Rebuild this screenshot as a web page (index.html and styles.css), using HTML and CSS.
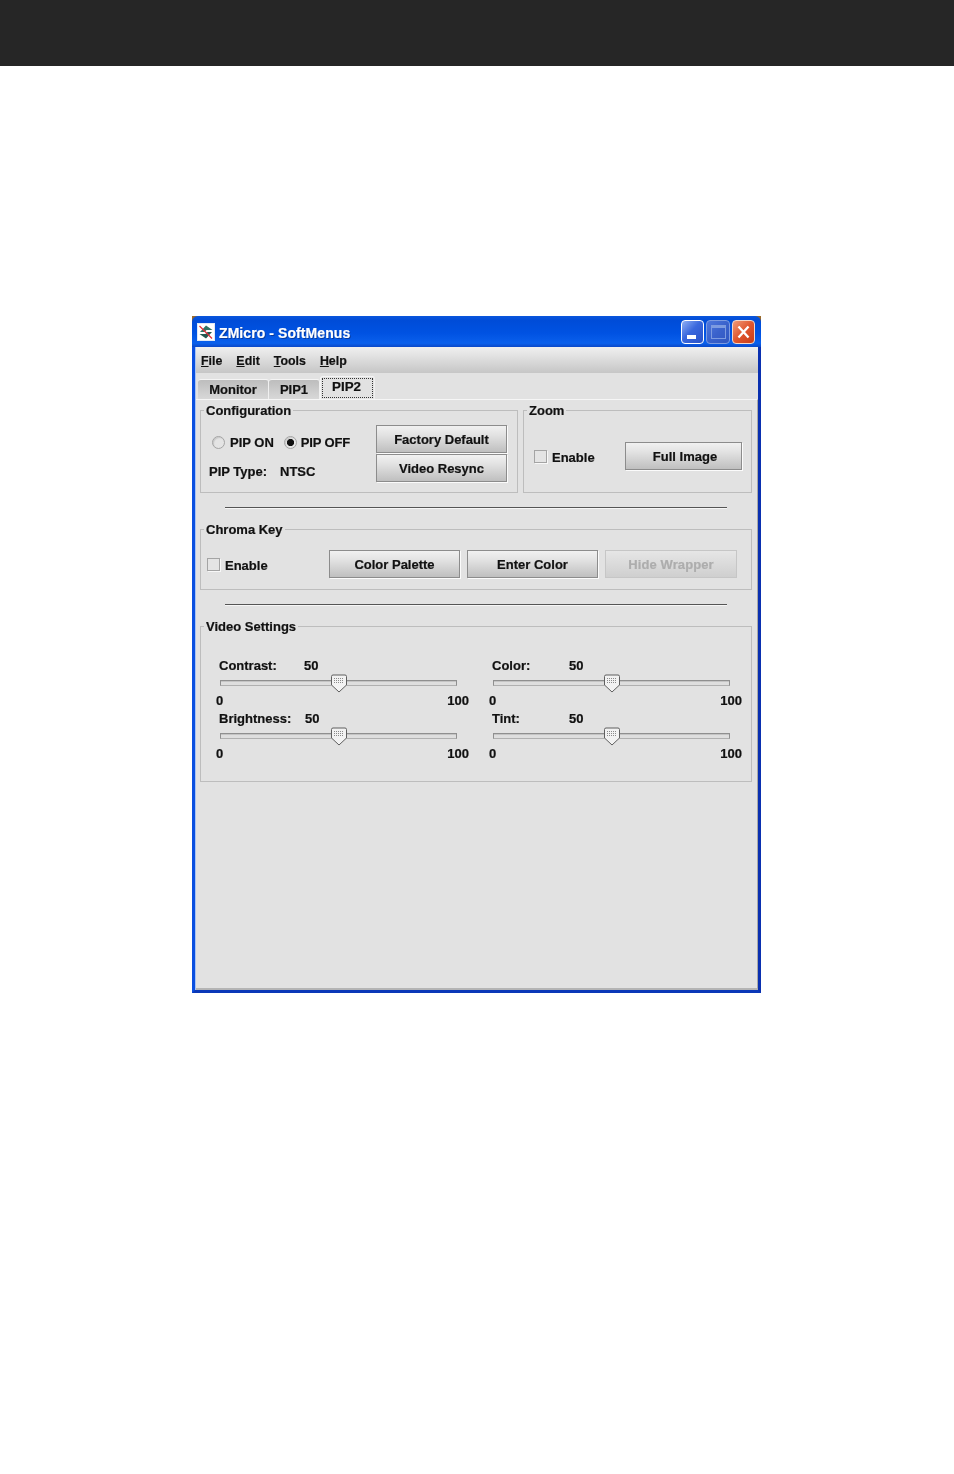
FILE: index.html
```html
<!DOCTYPE html>
<html lang="en">
<head>
<meta charset="utf-8">
<title>ZMicro - SoftMenus</title>
<link rel="stylesheet" href="styles.css">
</head>
<body>
<header class="page-bar"></header>
<main class="window">
  <div class="titlebar">
    <svg class="app-icon" viewBox="0 0 18 18" width="18" height="18" aria-hidden="true">
      <rect x="0.5" y="0.5" width="17" height="17" fill="#fff" stroke="#dfe8f5"/>
      <path d="M3 9 L9 2.5 L15.5 7 H9.5 L7.5 9 Z" fill="#2f7466"/>
      <path d="M15 9 L9 15.5 L2.5 11 H8.5 L10.5 9 Z" fill="#24584f"/>
      <path d="M2.5 3 L15 15.5" stroke="#e0303a" stroke-width="1.2"/>
    </svg>
    <span class="title">ZMicro - SoftMenus</span>
    <div class="controls">
      <span class="ctl ctl-min"><i class="glyph-min"></i></span>
      <span class="ctl ctl-max"><i class="glyph-max"></i></span>
      <span class="ctl ctl-close">
        <svg viewBox="0 0 23 24" width="21" height="22" aria-hidden="true"><path d="M6 6 L17 18 M17 6 L6 18" stroke="#fff" stroke-width="2.6"/></svg>
      </span>
    </div>
  </div>
  <div class="client">
    <nav class="menubar">
      <span><u>F</u>ile</span>
      <span><u>E</u>dit</span>
      <span><u>T</u>ools</span>
      <span><u>H</u>elp</span>
    </nav>
    <div class="tabs">
      <span class="tab tab-monitor">Monitor</span>
      <span class="tab tab-pip1">PIP1</span>
      <span class="tab tab-active"><b class="focus">PIP2</b></span>
    </div>
    <section class="panel">
      <div class="row-top">
        <fieldset class="group group-config">
          <legend>Configuration</legend>
          <div class="config">
            <div class="config-left">
              <div class="radios">
                <label class="opt"><input type="radio" name="pip" class="radio">PIP ON</label>
                <label class="opt opt-off"><input type="radio" name="pip" class="radio" checked>PIP OFF</label>
              </div>
              <div class="pip-type"><span class="pip-label">PIP Type:</span><span>NTSC</span></div>
            </div>
            <div class="config-buttons">
              <button class="btn btn-wide">Factory Default</button>
              <button class="btn btn-wide">Video Resync</button>
            </div>
          </div>
        </fieldset>
        <fieldset class="group group-zoom">
          <legend>Zoom</legend>
          <div class="zoom">
            <label class="opt"><input type="checkbox" class="check">Enable</label>
            <button class="btn btn-full">Full Image</button>
          </div>
        </fieldset>
      </div>
      <hr class="sep">
      <fieldset class="group group-chroma">
        <legend>Chroma Key</legend>
        <div class="chroma">
          <label class="opt chroma-enable"><input type="checkbox" class="check">Enable</label>
          <button class="btn btn-wide">Color Palette</button>
          <button class="btn btn-wide">Enter Color</button>
          <button class="btn btn-hide" disabled>Hide Wrapper</button>
        </div>
      </fieldset>
      <hr class="sep">
      <fieldset class="group group-video">
        <legend>Video Settings</legend>
        <div class="sliders">
          <div class="slider">
            <div class="slider-head"><span class="s-label">Contrast:</span><span>50</span></div>
            <div class="track"><svg class="thumb" viewBox="0 0 18 19" width="18" height="19" aria-hidden="true"><use href="#thumb"/></svg></div>
            <div class="ends"><span>0</span><span>100</span></div>
          </div>
          <div class="slider slider-right">
            <div class="slider-head"><span class="s-label">Color:</span><span>50</span></div>
            <div class="track"><svg class="thumb" viewBox="0 0 18 19" width="18" height="19" aria-hidden="true"><use href="#thumb"/></svg></div>
            <div class="ends"><span>0</span><span>100</span></div>
          </div>
          <div class="slider">
            <div class="slider-head"><span class="s-label s-label-long">Brightness:</span><span>50</span></div>
            <div class="track"><svg class="thumb" viewBox="0 0 18 19" width="18" height="19" aria-hidden="true"><use href="#thumb"/></svg></div>
            <div class="ends"><span>0</span><span>100</span></div>
          </div>
          <div class="slider slider-right">
            <div class="slider-head"><span class="s-label">Tint:</span><span>50</span></div>
            <div class="track"><svg class="thumb" viewBox="0 0 18 19" width="18" height="19" aria-hidden="true"><use href="#thumb"/></svg></div>
            <div class="ends"><span>0</span><span>100</span></div>
          </div>
        </div>
      </fieldset>
    </section>
  </div>
</main>
<svg class="defs" width="0" height="0" aria-hidden="true">
  <defs>
    <pattern id="dots" width="2" height="2" patternUnits="userSpaceOnUse">
      <rect width="1" height="1" fill="#8a8a8a"/>
    </pattern>
    <g id="thumb">
      <path d="M1.5 2.5 Q1.5 1 3 1 H15 Q16.5 1 16.5 2.5 V11 L9 18 L1.5 11 Z" fill="#f2f2f2" stroke="#5f5f5f" stroke-width="1"/>
      <rect x="4" y="3" width="10" height="6" fill="url(#dots)"/>
    </g>
  </defs>
</svg>
</body>
</html>
```
FILE: styles.css
```css
* { box-sizing: border-box; }
html, body { margin: 0; padding: 0; background: #fff; }
body {
  font-family: "Liberation Sans", Arial, sans-serif;
  font-size: 13px;
  font-weight: 700;
  color: #111;
  -webkit-text-stroke: 0.2px currentColor;
}

.page-bar { height: 66px; background: #262626; }

.window {
  width: 569px;
  height: 677px;
  margin: 250px 0 0 192px;
  display: flex;
  flex-direction: column;
  background: #9a6a2a;
  filter: blur(0.35px);
}

.titlebar {
  height: 31px;
  flex: none;
  display: flex;
  align-items: center;
  padding: 0 6px 0 5px;
  border-radius: 6px 6px 0 0;
  background: linear-gradient(#0a56dc 0, #004cd8 15%, #0052e2 55%, #0a60ec 88%, #0a48c8 100%);
}
.app-icon { flex: none; margin-right: 4px; }
.title { color: #fff; font-size: 14px; letter-spacing: 0.08px; padding-top: 2px; text-shadow: 1px 1px 0 #0b3a9a; }
.controls { margin-left: auto; display: flex; gap: 2px; }
.ctl {
  width: 23px; height: 24px;
  display: flex; align-items: center; justify-content: center;
  border: 1px solid #fff;
  border-radius: 4px;
  position: relative;
}
.ctl-min { background: linear-gradient(135deg, #8fb0f5 0, #3a68dd 45%, #2a52c8 100%); }
.ctl-max { width: 24px; background: linear-gradient(135deg, #4f78dd 0, #3a62cc 50%, #3056c0 100%); border-color: #7d9be0; }
.ctl-close { background: linear-gradient(135deg, #f09a78 0, #e0562e 50%, #c83c18 100%); border-color: #f2d8cc; }
.glyph-min { position: absolute; left: 5px; bottom: 4px; width: 9px; height: 4px; background: #fff; }
.glyph-max { display: block; width: 15px; height: 14px; border: 1px solid #7d9be0; border-top-width: 3px; }

.client {
  flex: 1;
  display: flex;
  flex-direction: column;
  min-height: 0;
  padding-left: 1px;
  background: #a8c4f4;
  border-left: 3px solid #0a4fe0;
  border-right: 3px solid #0a30b0;
  border-bottom: 3px solid #0a38b8;
}

.menubar {
  height: 26px;
  flex: none;
  display: flex;
  align-items: center;
  gap: 14px;
  padding: 2px 0 0 5px;
  font-size: 12.4px;
  background: linear-gradient(#f0f0f0, #c6c6c6);
}

.tabs {
  height: 26px;
  flex: none;
  display: flex;
  align-items: flex-end;
  padding-left: 2px;
  background: #e2e2e2;
}
.tab {
  height: 20px;
  display: flex;
  align-items: center;
  justify-content: center;
  border-radius: 3px 3px 0 0;
  border-top: 1px solid #f4f4f4;
  border-right: 1px solid #f0f0f0;
  background: linear-gradient(#bdbdbd, #d8d8d8);
}
.tab-monitor { width: 71px; }
.tab-pip1 { width: 51px; }
.tab-active {
  width: 55px;
  height: 23px;
  background: #e2e2e2;
  border-left: 1px solid #f4f4f4;
  padding: 1px;
}
.focus {
  display: flex;
  align-items: flex-start;
  justify-content: center;
  width: 100%;
  height: 100%;
  padding-right: 2px;
  border: 1px dotted #333;
  font-size: 13.4px;
  line-height: 16px;
}

.panel {
  flex: 1;
  padding: 3px 5px 0 4px;
  background: #e2e2e2;
  border-top: 1px solid #f6f6f6;
  border-right: 1px solid #a8a8a8;
  border-bottom: 2px solid #b4b4b4;
  min-height: 0;
}

.row-top { display: flex; gap: 5px; }

.group {
  margin: 0;
  padding: 0;
  min-width: 0;
  border: 1px solid #bdbdbd;
}
.group legend {
  margin-left: 3px;
  padding: 0 2px;
  font-size: 13px;
  line-height: 15px;
  height: 15px;
}
.group-config { width: 318px; height: 90px; }
.group-zoom { width: 229px; height: 90px; }
.group-chroma { width: 552px; height: 68px; }
.group-video { width: 552px; height: 163px; }

.sep {
  width: 502px;
  height: 1px;
  margin: 14px 0 14px 25px;
  border: 0;
  background: #555;
  box-shadow: 0 1px 0 #f6f6f6;
}

.opt { display: inline-flex; align-items: center; gap: 5px; white-space: nowrap; }
.opt-off { gap: 4px; letter-spacing: -0.15px; }
.zoom .opt, .chroma .opt { padding-top: 2px; }

.radio, .check {
  appearance: none;
  -webkit-appearance: none;
  width: 13px;
  height: 13px;
  margin: 0;
  flex: none;
  background: #e4e4e4;
  border: 1px solid #a4a4a4;
}
.radio { border-radius: 50%; box-shadow: inset 1px 1px 1px #c8c8c8; }
.radio:checked { background: radial-gradient(circle, #111 0, #111 3.2px, #e8e8e8 4px); }
.check { position: relative; top: -1px; box-shadow: 1px 1px 0 #f8f8f8; }

.config { display: flex; justify-content: space-between; padding: 7px 10px 0 0; }
.config-left { padding-top: 3px; display: flex; flex-direction: column; }
.radios { height: 29px; display: flex; align-items: center; gap: 10px; padding-left: 11px; }
.pip-type { height: 29px; display: flex; align-items: center; padding-left: 8px; }
.pip-label { width: 71px; }
.config-buttons { display: flex; flex-direction: column; gap: 1px; }

.btn {
  height: 28px;
  padding: 1px 0 0;
  font: inherit;
  color: #111;
  border: 1px solid #8c8c8c;
  border-radius: 0;
  background: linear-gradient(#f1f1f1, #e2e2e2 35%, #bfbfbf);
  box-shadow: 1px 1px 0 #fbfbfb;
}
.btn:disabled {
  color: #adadad;
  border-color: #c6c6c6;
  background: linear-gradient(#e6e6e6, #cfcfcf);
  box-shadow: none;
}
.btn-wide { width: 131px; }
.btn-hide { width: 132px; letter-spacing: 0.1px; }
.btn-full { width: 117px; padding-left: 3px; }

.zoom { display: flex; align-items: center; justify-content: space-between; padding: 24px 9px 0 10px; }
.chroma { display: flex; align-items: center; gap: 7px; padding: 13px 0 0 6px; }
.chroma-enable { width: 115px; }

.sliders {
  display: grid;
  grid-template-columns: 253px 253px;
  column-gap: 20px;
  grid-auto-rows: 53px;
  padding: 24px 0 0 15px;
}
.slider-head { height: 16px; line-height: 16px; display: flex; padding-left: 3px; }
.s-label { width: 85px; }
.s-label-long { width: 86px; }
.slider-right .s-label { width: 77px; }
.track {
  position: relative;
  width: 237px;
  height: 6px;
  margin: 6px 0 6px 4px;
  background: #dedede;
  border: 1px solid #8f8f8f;
  border-bottom-color: #b0b0b0;
  box-shadow: inset 0 1px 0 #c4c4c4;
}
.thumb { position: absolute; left: 109px; top: -7px; }
.ends { height: 17px; line-height: 17px; display: flex; justify-content: space-between; }
.defs { position: absolute; }
```
